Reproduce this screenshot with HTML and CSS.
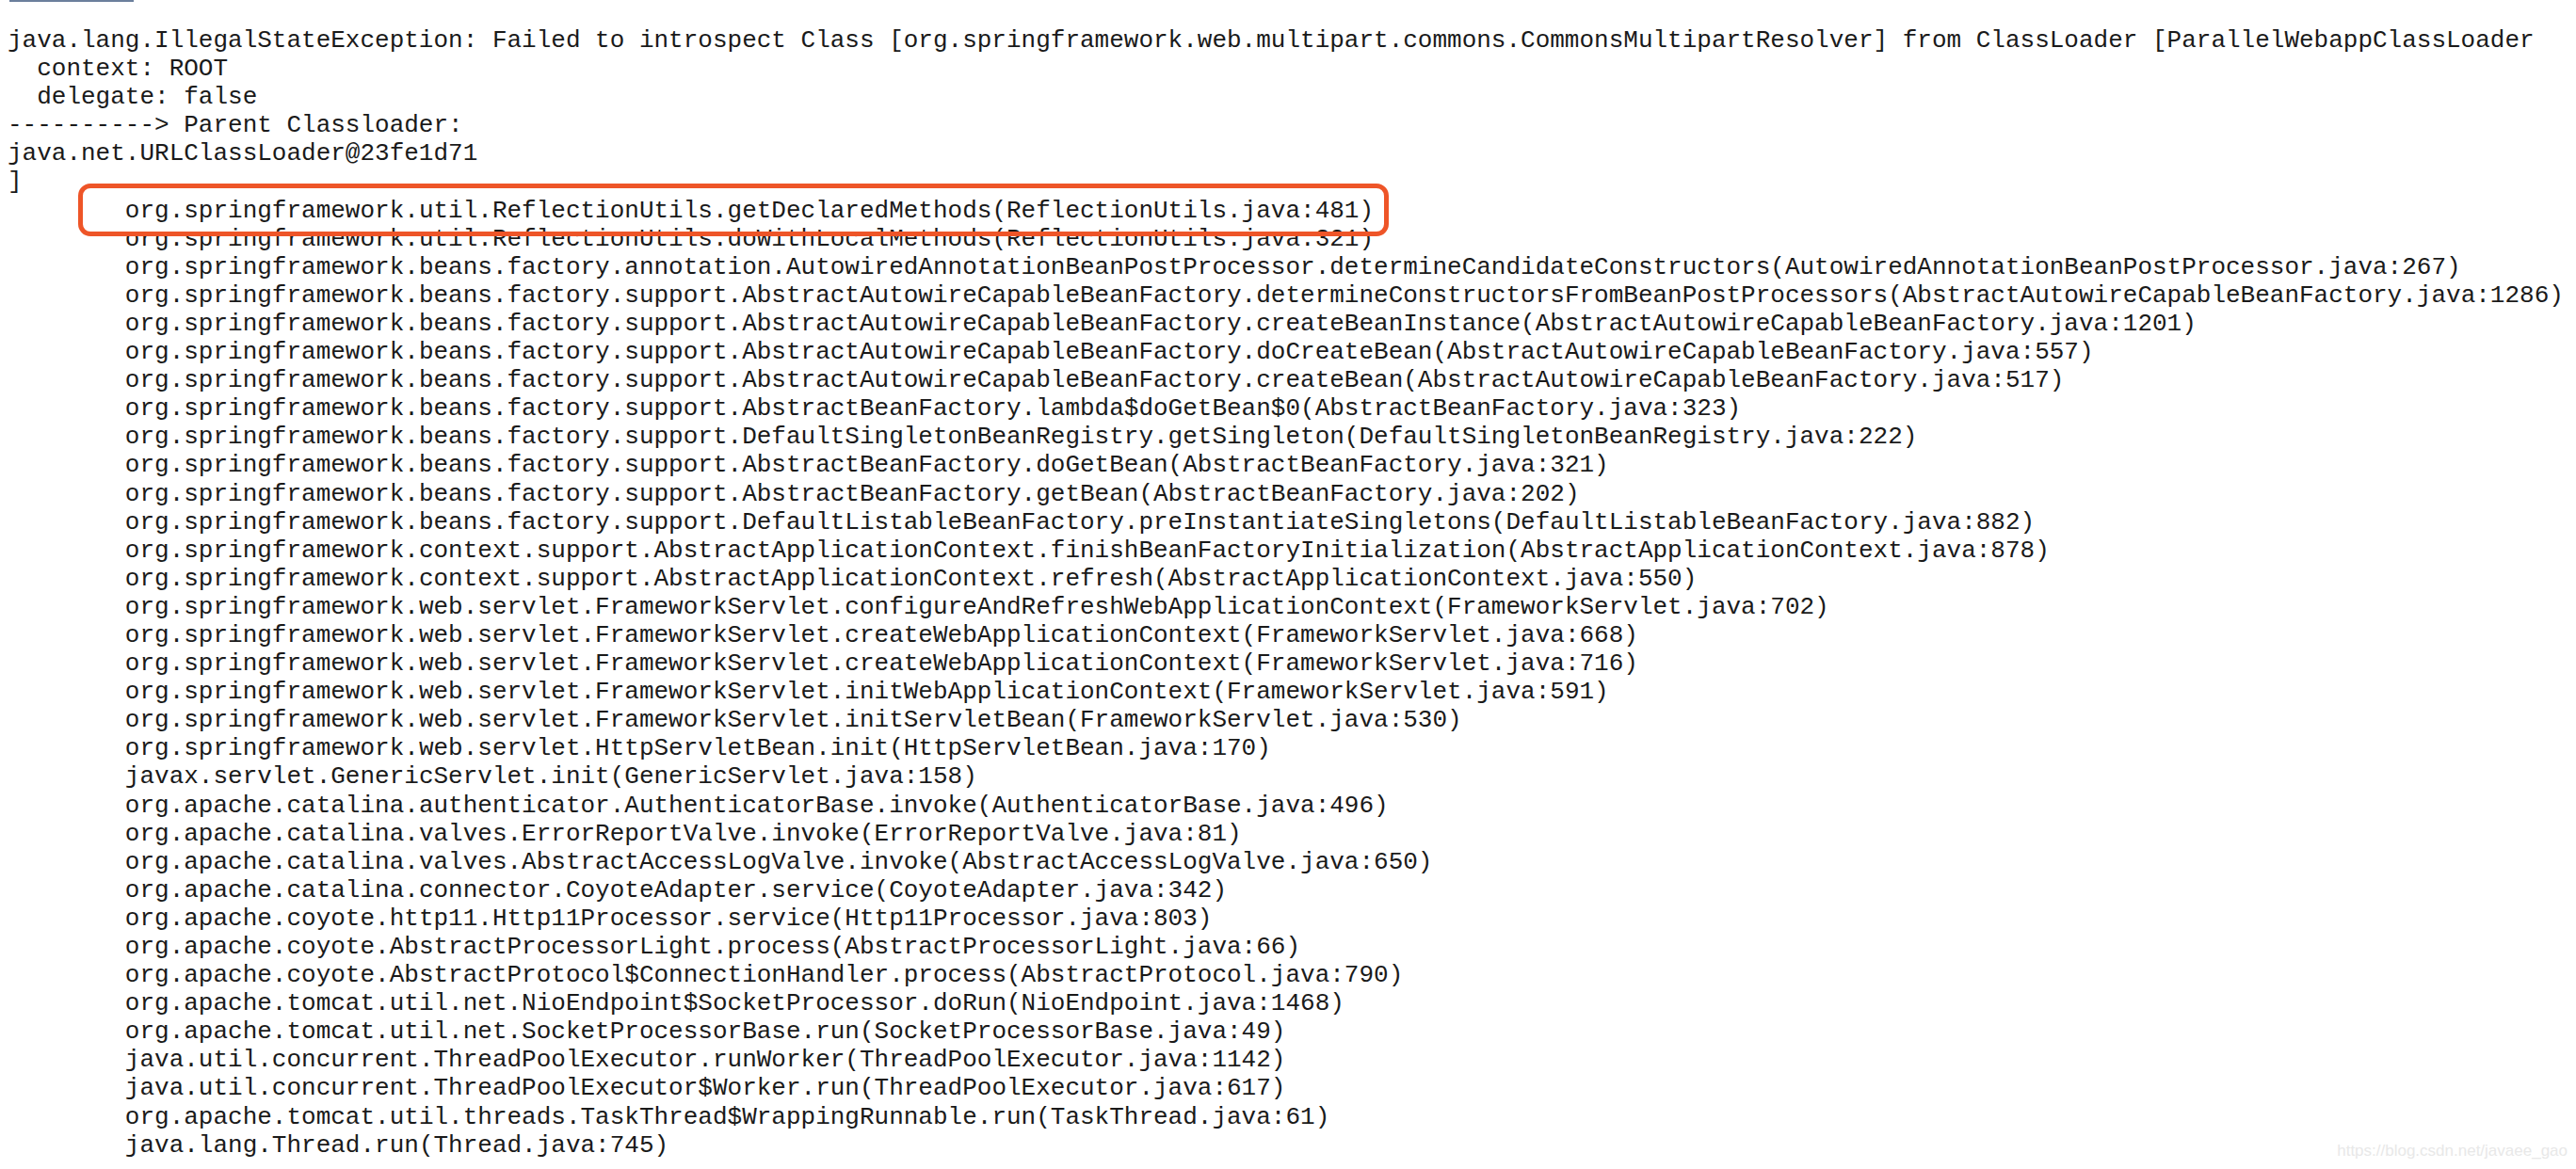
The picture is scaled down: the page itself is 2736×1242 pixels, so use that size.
FILE: index.html
```html
<!DOCTYPE html>
<html lang="en">
<head>
    <meta charset="UTF-8">
    <title>Stack trace</title>
    <link rel="stylesheet" href="styles.css">
</head>
<body>
    <div class="tab-edge"></div>
<pre class="trace">java.lang.IllegalStateException: Failed to introspect Class [org.springframework.web.multipart.commons.CommonsMultipartResolver] from ClassLoader [ParallelWebappClassLoader
  context: ROOT
  delegate: false
----------&gt; Parent Classloader:
java.net.URLClassLoader@23fe1d71
]
	<span class="mark">org.springframework.util.ReflectionUtils.getDeclaredMethods(ReflectionUtils.java:481)</span>
	org.springframework.util.ReflectionUtils.doWithLocalMethods(ReflectionUtils.java:321)
	org.springframework.beans.factory.annotation.AutowiredAnnotationBeanPostProcessor.determineCandidateConstructors(AutowiredAnnotationBeanPostProcessor.java:267)
	org.springframework.beans.factory.support.AbstractAutowireCapableBeanFactory.determineConstructorsFromBeanPostProcessors(AbstractAutowireCapableBeanFactory.java:1286)
	org.springframework.beans.factory.support.AbstractAutowireCapableBeanFactory.createBeanInstance(AbstractAutowireCapableBeanFactory.java:1201)
	org.springframework.beans.factory.support.AbstractAutowireCapableBeanFactory.doCreateBean(AbstractAutowireCapableBeanFactory.java:557)
	org.springframework.beans.factory.support.AbstractAutowireCapableBeanFactory.createBean(AbstractAutowireCapableBeanFactory.java:517)
	org.springframework.beans.factory.support.AbstractBeanFactory.lambda$doGetBean$0(AbstractBeanFactory.java:323)
	org.springframework.beans.factory.support.DefaultSingletonBeanRegistry.getSingleton(DefaultSingletonBeanRegistry.java:222)
	org.springframework.beans.factory.support.AbstractBeanFactory.doGetBean(AbstractBeanFactory.java:321)
	org.springframework.beans.factory.support.AbstractBeanFactory.getBean(AbstractBeanFactory.java:202)
	org.springframework.beans.factory.support.DefaultListableBeanFactory.preInstantiateSingletons(DefaultListableBeanFactory.java:882)
	org.springframework.context.support.AbstractApplicationContext.finishBeanFactoryInitialization(AbstractApplicationContext.java:878)
	org.springframework.context.support.AbstractApplicationContext.refresh(AbstractApplicationContext.java:550)
	org.springframework.web.servlet.FrameworkServlet.configureAndRefreshWebApplicationContext(FrameworkServlet.java:702)
	org.springframework.web.servlet.FrameworkServlet.createWebApplicationContext(FrameworkServlet.java:668)
	org.springframework.web.servlet.FrameworkServlet.createWebApplicationContext(FrameworkServlet.java:716)
	org.springframework.web.servlet.FrameworkServlet.initWebApplicationContext(FrameworkServlet.java:591)
	org.springframework.web.servlet.FrameworkServlet.initServletBean(FrameworkServlet.java:530)
	org.springframework.web.servlet.HttpServletBean.init(HttpServletBean.java:170)
	javax.servlet.GenericServlet.init(GenericServlet.java:158)
	org.apache.catalina.authenticator.AuthenticatorBase.invoke(AuthenticatorBase.java:496)
	org.apache.catalina.valves.ErrorReportValve.invoke(ErrorReportValve.java:81)
	org.apache.catalina.valves.AbstractAccessLogValve.invoke(AbstractAccessLogValve.java:650)
	org.apache.catalina.connector.CoyoteAdapter.service(CoyoteAdapter.java:342)
	org.apache.coyote.http11.Http11Processor.service(Http11Processor.java:803)
	org.apache.coyote.AbstractProcessorLight.process(AbstractProcessorLight.java:66)
	org.apache.coyote.AbstractProtocol$ConnectionHandler.process(AbstractProtocol.java:790)
	org.apache.tomcat.util.net.NioEndpoint$SocketProcessor.doRun(NioEndpoint.java:1468)
	org.apache.tomcat.util.net.SocketProcessorBase.run(SocketProcessorBase.java:49)
	java.util.concurrent.ThreadPoolExecutor.runWorker(ThreadPoolExecutor.java:1142)
	java.util.concurrent.ThreadPoolExecutor$Worker.run(ThreadPoolExecutor.java:617)
	org.apache.tomcat.util.threads.TaskThread$WrappingRunnable.run(TaskThread.java:61)
	java.lang.Thread.run(Thread.java:745)</pre>
    <div class="watermark">https://blog.csdn.net/javaee_gao</div>
</body>
</html>
```

FILE: styles.css
```css
body {
    margin: 0;
    background: #fff;
    color: #1a1a1a;
}
.tab-edge {
    width: 132px;
    height: 2px;
    margin-left: 10px;
    background: #6b7f9c;
}
.trace {
    margin: 26px 0 0 8px;
    font-family: "Liberation Mono", "Courier New", monospace;
    font-size: 26px;
    line-height: 30.1px;
    tab-size: 8;
}
.mark {
    position: relative;
}
.mark::after {
    content: "";
    position: absolute;
    left: -50px;
    right: -16px;
    top: -14px;
    bottom: -12px;
    border: 5px solid #ee5528;
    border-radius: 13px;
}
.watermark {
    position: absolute;
    right: 9px;
    top: 1213px;
    font-family: "Liberation Sans", Arial, sans-serif;
    font-size: 17px;
    color: #e8e8e8;
}
```
